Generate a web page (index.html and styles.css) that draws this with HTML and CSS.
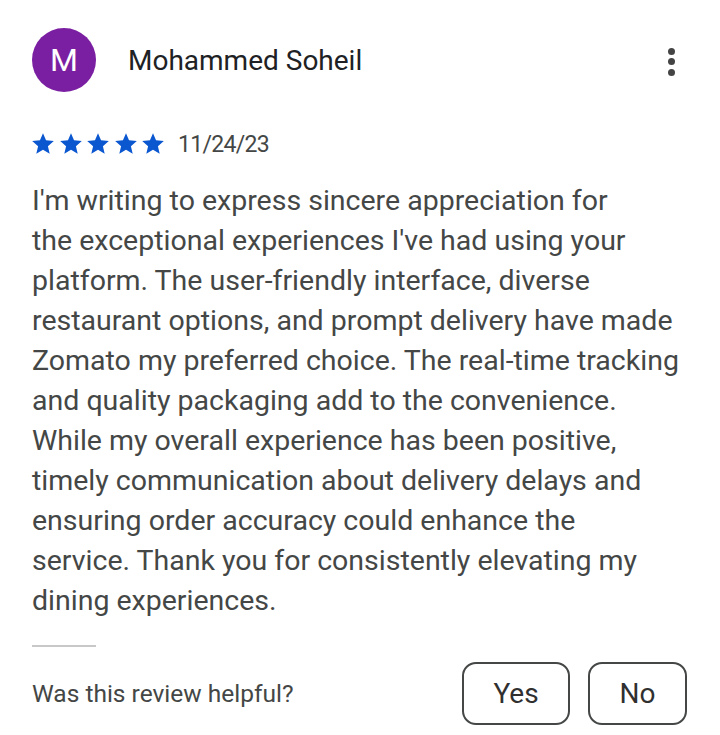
FILE: index.html
```html
<!DOCTYPE html>
<html>
<head>
<meta charset="utf-8">
<link rel="stylesheet" href="styles.css">
</head>
<body>
<div class="review">
  <div class="header">
    <div class="avatar">M</div>
    <div class="name">Mohammed Soheil</div>
    <div class="more"><span></span><span></span><span></span></div>
  </div>
  <div class="meta">
    <div class="stars">
      <svg viewBox="0 0 24 24"><path d="M12 17.27L18.18 21l-1.64-7.03L22 9.24l-7.19-.61L12 2 9.19 8.63 2 9.24l5.46 4.73L5.82 21z"/></svg>
      <svg viewBox="0 0 24 24"><path d="M12 17.27L18.18 21l-1.64-7.03L22 9.24l-7.19-.61L12 2 9.19 8.63 2 9.24l5.46 4.73L5.82 21z"/></svg>
      <svg viewBox="0 0 24 24"><path d="M12 17.27L18.18 21l-1.64-7.03L22 9.24l-7.19-.61L12 2 9.19 8.63 2 9.24l5.46 4.73L5.82 21z"/></svg>
      <svg viewBox="0 0 24 24"><path d="M12 17.27L18.18 21l-1.64-7.03L22 9.24l-7.19-.61L12 2 9.19 8.63 2 9.24l5.46 4.73L5.82 21z"/></svg>
      <svg viewBox="0 0 24 24"><path d="M12 17.27L18.18 21l-1.64-7.03L22 9.24l-7.19-.61L12 2 9.19 8.63 2 9.24l5.46 4.73L5.82 21z"/></svg>
    </div>
    <span class="date">11/24/23</span>
  </div>
  <p class="text">I'm writing to express sincere appreciation for<br>the exceptional experiences I've had using your<br>platform. The user-friendly interface, diverse<br>restaurant options, and prompt delivery have made<br>Zomato my preferred choice. The real-time tracking<br>and quality packaging add to the convenience.<br>While my overall experience has been positive,<br>timely communication about delivery delays and<br>ensuring order accuracy could enhance the<br>service. Thank you for consistently elevating my<br>dining experiences.</p>
  <div class="divider"></div>
  <div class="helpful">
    <span class="question">Was this review helpful?</span>
    <div class="buttons">
      <button class="btn yes">Yes</button>
      <button class="btn no">No</button>
    </div>
  </div>
</div>
</body>
</html>
```
FILE: styles.css
```css
* { box-sizing: border-box; }
html, body { margin: 0; padding: 0; background: #fff; }
body { font-family: Roboto, "Noto Sans", sans-serif; }
.review { padding: 28px 32px 0 32px; width: 720px; }
.header { display: flex; align-items: center; height: 64px; }
.avatar {
  width: 64px; height: 64px; border-radius: 50%;
  background: #7b1fa2; color: #fff;
  display: flex; align-items: center; justify-content: center;
  font-size: 32px; flex: none;
}
.name { margin-left: 32px; font-size: 28px; color: #202124; flex: 1; }
.more { display: flex; flex-direction: column; gap: 3.5px; margin-right: 13px; margin-top: 3px; align-items: center; }
.more span { width: 7px; height: 7px; border-radius: 50%; background: #444; display: block; }
.meta { display: flex; align-items: center; margin-top: 38px; height: 28px; }
.stars { display: flex; gap: 1.5px; margin-left: -2px; }
.stars svg { width: 26px; height: 26px; fill: #0b57d0; display: block; }
.date { margin-left: 12px; font-size: 23px; letter-spacing: -0.7px; color: #444746; }
.text {
  margin: 23px 0 0 0; font-size: 28.5px; line-height: 40px; color: #444746;
  white-space: nowrap;
}
.divider { width: 64px; height: 2px; background: #c8c8c8; margin-top: 24px; }
.helpful { display: flex; align-items: center; justify-content: space-between; margin-top: 15px; }
.question { font-size: 24.5px; color: #444746; }
.buttons { display: flex; gap: 18px; margin-right: 1px; }
.btn {
  height: 63px; border: 2px solid #444746; border-radius: 14px; background: #fff;
  font-family: Roboto, "Noto Sans", sans-serif; font-size: 28px; color: #303030; padding: 0;
}
.yes { width: 108px; }
.no { width: 99px; }
```
